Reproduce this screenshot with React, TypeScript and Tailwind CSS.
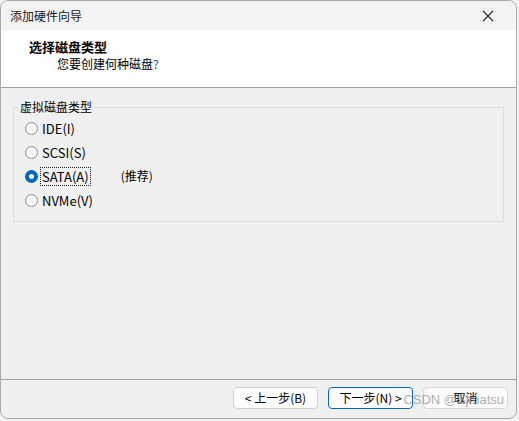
import React from 'react';

const font = { fontFamily: '"Noto Sans CJK SC", "Microsoft YaHei", sans-serif' };

type Opt = { label: string; checked?: boolean; note?: string };

const OPTIONS: Opt[] = [
  { label: 'IDE(I)' },
  { label: 'SCSI(S)' },
  { label: 'SATA(A)', checked: true, note: '(推荐)' },
  { label: 'NVMe(V)' },
];

function Radio({ checked }: { checked?: boolean }) {
  if (checked) {
    return (
      <span className="flex h-[13px] w-[13px] shrink-0 items-center justify-center rounded-full bg-[#0067c0]">
        <span className="h-[5px] w-[5px] rounded-full bg-white" />
      </span>
    );
  }
  return <span className="h-[13px] w-[13px] shrink-0 rounded-full border border-[#8b8b8b] bg-[#f6f6f6]" />;
}

export default function App() {
  return (
    <div className="relative h-[421px] w-[519px] overflow-hidden bg-[#f3f3f3] text-[12px] text-black" style={font}>
      <div className="flex h-[419px] w-[517px] flex-col overflow-hidden rounded-lg border border-[#a9a9a9] bg-[#f0f0f0]">
        {/* title bar */}
        <div className="flex h-[29px] shrink-0 items-center justify-between bg-[#f3f3f3] pl-[9px] pr-[22px]">
          <span className="text-[12px] text-[#1a1a1a]">添加硬件向导</span>
          <svg width="12" height="12" viewBox="0 0 12 12" className="text-[#222]">
            <path d="M1 1 L11 11 M11 1 L1 11" stroke="currentColor" strokeWidth="1.1" />
          </svg>
        </div>

        {/* header */}
        <div className="h-[58px] shrink-0 border-b border-[#a0a0a0] bg-white pl-[28px] pt-[8px]">
          <div className="text-[13px] font-bold leading-[18px]">选择磁盘类型</div>
          <div className="pl-[28px] text-[12px] leading-[16px]">
            您要创建何种磁盘<span className="text-[#0b57b0]">?</span>
          </div>
        </div>

        {/* body */}
        <div className="flex-1 px-[12px] pt-[11px]">
          <fieldset className="h-[123px] rounded-none border border-[#dcdcdc] pl-[4px] pr-[8px] pt-[1px]">
            <legend className="px-[2px] text-[12px] leading-[16px]">虚拟磁盘类型</legend>
            <div className="flex flex-col pl-[7px]">
              {OPTIONS.map((o) => (
                <div key={o.label} className="flex h-[24px] items-center">
                  <Radio checked={o.checked} />
                  <span
                    className={`ml-[3px] px-[1px] text-[13px] leading-[17px] ${o.checked ? 'outline outline-1 outline-dotted outline-[#222]' : ''}`}
                  >
                    {o.label}
                  </span>
                  {o.note && <span className="ml-[31px] text-[12px]">{o.note}</span>}
                </div>
              ))}
            </div>
          </fieldset>
        </div>

        {/* footer */}
        <div className="relative flex h-[39px] shrink-0 items-center justify-end gap-[10px] border-t border-[#a0a0a0] pr-[8px] pb-[2px]">
          <button className="h-[22px] w-[85px] rounded-[4px] border border-[#d0d0d0] bg-[#fdfdfd] text-[12px]">
            &lt; 上一步(B)
          </button>
          <button className="h-[22px] w-[85px] rounded-[4px] border border-[#0067c0] bg-[#fdfdfd] text-[12px]">
            下一步(N) &gt;
          </button>
          <button className="h-[22px] w-[85px] rounded-[4px] border border-[#d8d8d8] bg-[#fbfbfb] text-[12px]">
            取消
          </button>
          <span
            className="pointer-events-none absolute right-[12px] top-[10px] text-[13px] text-[#9a9a9a]/80"
            style={{ fontFamily: '"Liberation Sans", sans-serif' }}
          >
            CSDN @Sjmatsu
          </span>
        </div>
      </div>
    </div>
  );
}
